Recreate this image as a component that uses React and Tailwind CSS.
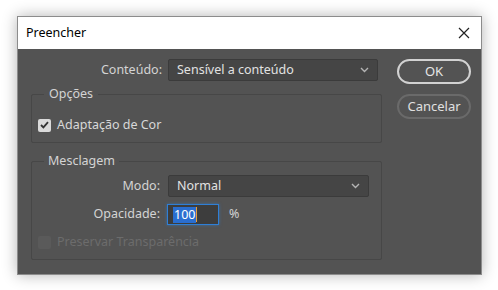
import { useState } from 'react';

const font = { fontFamily: '"Noto Sans", "Open Sans", "Liberation Sans", sans-serif' };

function Chevron() {
  return (
    <svg width="9" height="6" viewBox="0 0 9 6" className="shrink-0">
      <path d="M1 1l3.5 3.5L8 1" fill="none" stroke="#b4b4b4" strokeWidth="1.4" />
    </svg>
  );
}

function Select({ value, className }) {
  return (
    <div
      className={`flex h-[22px] items-center justify-between rounded-[2px] border border-[#3b3b3b] bg-[#454545] pl-2 pr-2 text-[12.5px] text-[#e2e2e2] ${className}`}
    >
      <span>{value}</span>
      <Chevron />
    </div>
  );
}

function Checkbox({ checked, disabled, label }) {
  return (
    <label className="flex h-4 items-center gap-[6px]">
      <span
        className={`flex h-[13px] w-[13px] items-center justify-center rounded-[2px] ${
          disabled ? 'bg-[#5a5a5a]' : 'bg-[#dadada]'
        }`}
      >
        {checked && (
          <svg width="9" height="8" viewBox="0 0 9 8">
            <path d="M1 4l2.4 2.4L8 1.2" fill="none" stroke="#333" strokeWidth="1.8" />
          </svg>
        )}
      </span>
      <span className={`text-[12.5px] ${disabled ? 'text-[#6c6c6c]' : 'text-[#d8d8d8]'}`}>{label}</span>
    </label>
  );
}

export default function App() {
  const [opacity] = useState('100');

  return (
    <div className="h-[290px] w-[498px] bg-white pl-[17px] pt-[16px]" style={font}>
      <div className="w-[465px] border border-[#8c8c8c] shadow-[0_0_14px_rgba(0,0,0,0.3)]">
        {/* Title bar */}
        <div className="flex h-[32px] items-center justify-between bg-white pl-[8px] pr-[11px]">
          <span className="text-[12.5px] text-black">Preencher</span>
          <svg width="12" height="12" viewBox="0 0 12 12">
            <path d="M1 1l10 10M11 1L1 11" stroke="#222" strokeWidth="1.2" />
          </svg>
        </div>

        {/* Body */}
        <div className="flex h-[225px] gap-[15px] bg-[#535353] pl-[13px] pt-[10px]">
          <div className="w-[351px]">
            {/* Conteúdo */}
            <div className="flex items-center gap-[6px]">
              <span className="w-[131px] text-right text-[12.5px] text-[#d4d4d4]">Conteúdo:</span>
              <Select value="Sensível a conteúdo" className="w-[210px]" />
            </div>

            {/* Opções */}
            <fieldset className="mt-[5px] rounded-[2px] border border-[#474747] pb-[9px] pl-[6px] pt-[15px]">
              <legend className="ml-[6px] px-[5px] text-[12.5px] leading-4 text-[#d4d4d4]">Opções</legend>
              <Checkbox checked label="Adaptação de Cor" />
            </fieldset>

            {/* Mesclagem */}
            <fieldset className="mt-[10px] h-[107px] rounded-[2px] border border-[#474747] pl-[6px] pt-[6px]">
              <legend className="ml-[6px] px-[4px] text-[12.5px] leading-4 text-[#d4d4d4]">Mesclagem</legend>
              <div className="flex items-center gap-[8px]">
                <span className="w-[122px] text-right text-[12.5px] text-[#d4d4d4]">Modo:</span>
                <Select value="Normal" className="w-[201px]" />
              </div>
              <div className="mt-[7px] flex items-center gap-[7px]">
                <span className="w-[122px] text-right text-[12.5px] text-[#d4d4d4]">Opacidade:</span>
                <div className="flex h-[21px] w-[52px] items-center border border-[#2f7fd6] bg-[#3d3d3d] pl-[5px] shadow-[0_0_3px_rgba(47,127,214,0.6)]">
                  <span className="bg-[#2a6ed0] px-px text-[12.5px] leading-[16px] text-white">{opacity}</span>
                  <span className="h-[15px] w-px bg-[#e8a040]" />
                </div>
                <span className="ml-[3px] text-[12.5px] text-[#d4d4d4]">%</span>
              </div>
              <div className="mt-[9px]">
                <Checkbox disabled label="Preservar Transparência" />
              </div>
            </fieldset>
          </div>

          {/* Buttons */}
          <div className="flex w-[74px] flex-col gap-[10px]">
            <button className="h-[25px] rounded-full border-2 border-[#d2d2d2] text-[13px] text-[#e6e6e6]">OK</button>
            <button className="h-[25px] rounded-full border-2 border-[#6a6a6a] text-[13px] text-[#e0e0e0]">
              Cancelar
            </button>
          </div>
        </div>
      </div>
    </div>
  );
}
